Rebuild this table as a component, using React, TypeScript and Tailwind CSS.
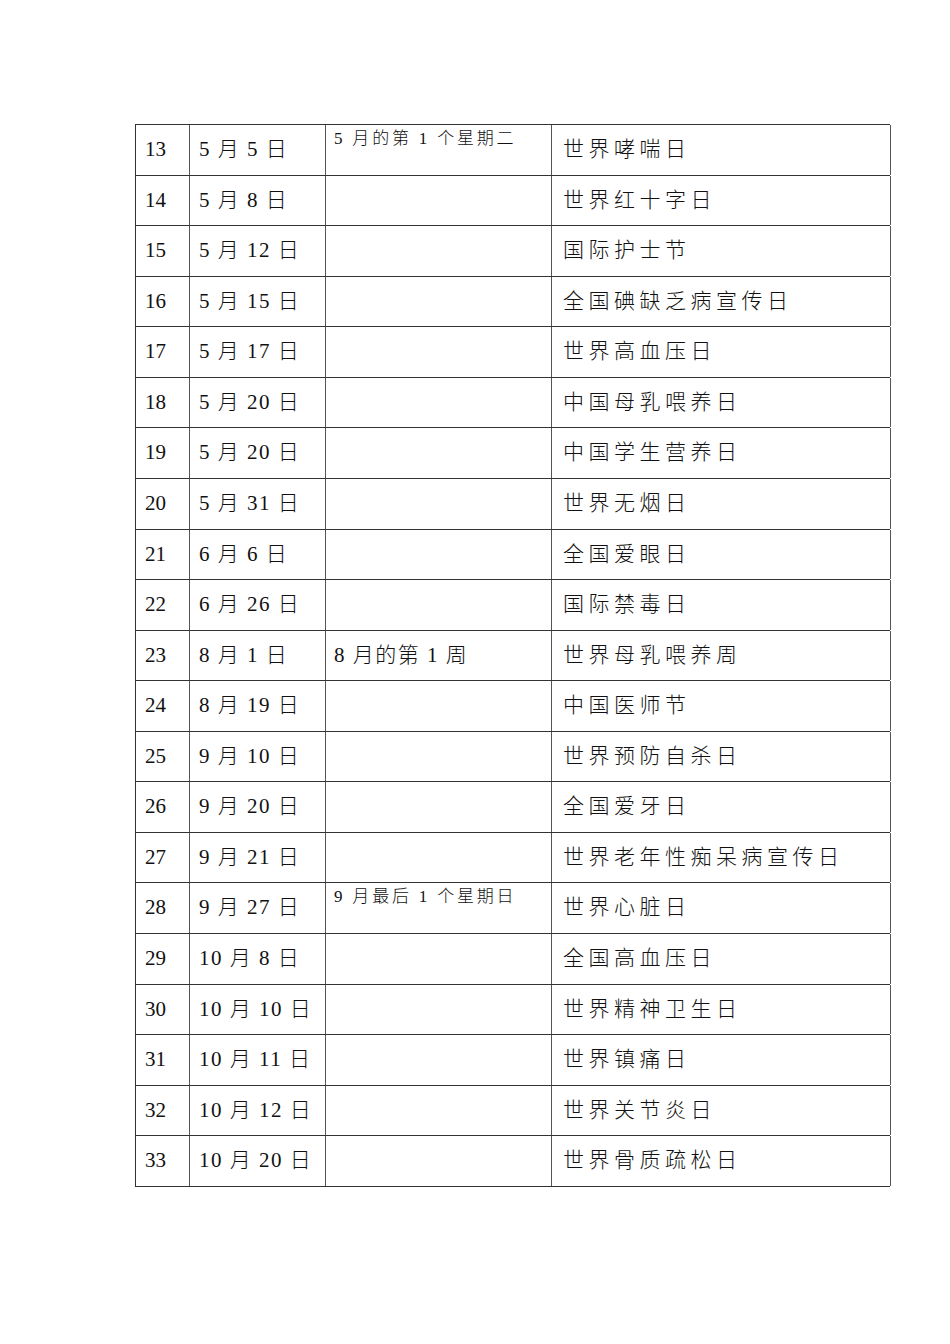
const rows: [string, string, string, string][] = [
  ["13", "5 月 5 日", "5 月的第 1 个星期二", "世界哮喘日"],
  ["14", "5 月 8 日", "", "世界红十字日"],
  ["15", "5 月 12 日", "", "国际护士节"],
  ["16", "5 月 15 日", "", "全国碘缺乏病宣传日"],
  ["17", "5 月 17 日", "", "世界高血压日"],
  ["18", "5 月 20 日", "", "中国母乳喂养日"],
  ["19", "5 月 20 日", "", "中国学生营养日"],
  ["20", "5 月 31 日", "", "世界无烟日"],
  ["21", "6 月 6 日", "", "全国爱眼日"],
  ["22", "6 月 26 日", "", "国际禁毒日"],
  ["23", "8 月 1 日", "8 月的第 1 周", "世界母乳喂养周"],
  ["24", "8 月 19 日", "", "中国医师节"],
  ["25", "9 月 10 日", "", "世界预防自杀日"],
  ["26", "9 月 20 日", "", "全国爱牙日"],
  ["27", "9 月 21 日", "", "世界老年性痴呆病宣传日"],
  ["28", "9 月 27 日", "9 月最后 1 个星期日", "世界心脏日"],
  ["29", "10 月 8 日", "", "全国高血压日"],
  ["30", "10 月 10 日", "", "世界精神卫生日"],
  ["31", "10 月 11 日", "", "世界镇痛日"],
  ["32", "10 月 12 日", "", "世界关节炎日"],
  ["33", "10 月 20 日", "", "世界骨质疏松日"],
];

export default function App() {
  return (
    <div
      className="min-h-[1344px] w-[950px] bg-white pt-[124px] pl-[135px] text-[#111] font-light"
      style={{ fontFamily: '"Liberation Serif", "Noto Sans CJK SC", serif' }}
    >
      <div className="w-[755px] border-t border-l border-[#333]">
        {rows.map(([no, date, note, name]) => (
          <div
            key={no}
            className="grid h-[50.57px] grid-cols-[54px_136px_226px_339px] border-b border-[#333]"
          >
            <div className="flex items-center border-r border-[#555] pl-[9px] text-[21px]">
              {no}
            </div>
            <div className="flex items-center overflow-hidden whitespace-nowrap border-r border-[#555] pl-[9px] text-[21px] tracking-[1.5px]">
              {date}
            </div>
            <div
              className={
                "flex overflow-hidden whitespace-nowrap border-r border-[#555] pl-[8px] " +
                (note.startsWith("8")
                  ? "items-center text-[21px] tracking-[1.5px]"
                  : "items-start pt-[1px] text-[17px] tracking-[2.8px]")
              }
            >
              {note}
            </div>
            <div className="flex items-center whitespace-nowrap border-r border-[#555] pl-[11px] text-[21px] tracking-[4.5px]">
              {name}
            </div>
          </div>
        ))}
      </div>
    </div>
  );
}
